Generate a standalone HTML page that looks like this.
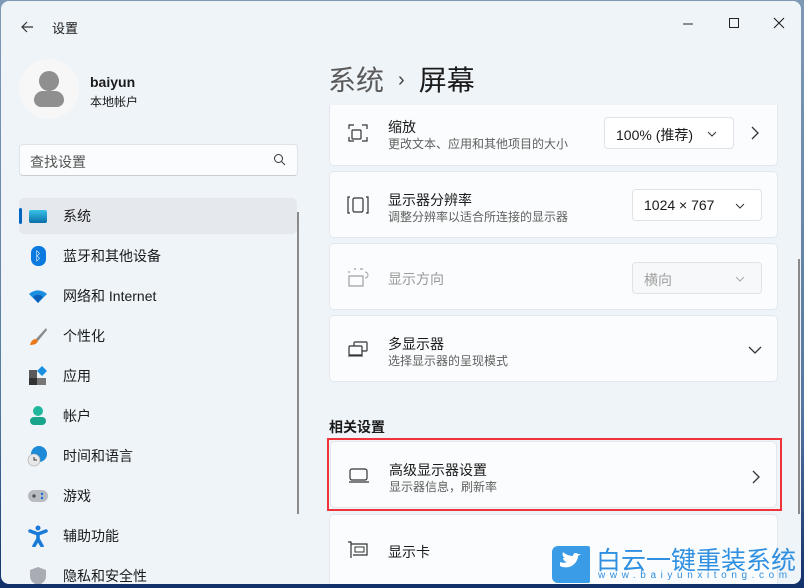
<!DOCTYPE html>
<html><head><meta charset="utf-8"><style>
*{margin:0;padding:0;box-sizing:border-box}
body{width:804px;height:588px;overflow:hidden;background:linear-gradient(#7f9ab6,#5577a0 70%,#12306a);font-family:"Liberation Sans","Noto Sans CJK SC",sans-serif;color:#1a1a1a;position:relative}
.win{position:absolute;left:1px;top:1px;width:800px;height:583px;background:#eff4f9;border-radius:8px;overflow:hidden}
.abs{position:absolute}
.nav{position:absolute;left:18px;width:278px;height:36px;font-size:14px;display:flex;align-items:center}
.nav .ic{width:22px;height:22px;margin-left:8px;margin-right:14px;display:flex;align-items:center;justify-content:center}
.card{position:absolute;left:328px;width:449px;background:#fbfcfd;border:1px solid #e3e7ec;border-radius:5px}
.t{position:absolute;left:58px;font-size:14px}
.s{position:absolute;left:58px;font-size:12px;color:#5f5f5f}
.dd{position:absolute;height:32px;border:1px solid #dfe3e8;border-radius:4px;background:#fff;font-size:14px;padding:7px 0 0 11px}
.dd svg{position:absolute;right:16px;top:13px}
</style></head><body>
<div class="win">
<svg class="abs" style="left:18px;top:18px" width="16" height="16"><path d="M14 8H3M8 3L3 8l5 5" stroke="#333" stroke-width="1.2" fill="none"/></svg>
<div class="abs" style="left:51px;top:17px;font-size:13px">设置</div>
<svg class="abs" style="left:682px;top:16px" width="110" height="14"><path d="M0 7h10" stroke="#222"/><path d="M46.5 1.5h9v9h-9z" stroke="#222" fill="none"/><path d="M91 1l10 10M101 1L91 11" stroke="#222" stroke-width="1.1"/></svg>
<div class="abs" style="left:18px;top:58px;width:60px;height:60px;border-radius:50%;background:#f7f7f7"></div>
<div class="abs" style="left:38px;top:70px;width:20px;height:20px;border-radius:50%;background:#8f8f8f"></div>
<div class="abs" style="left:33px;top:90px;width:30px;height:16px;border-radius:10px 10px 8px 8px;background:#8f8f8f"></div>
<div class="abs" style="left:89px;top:73px;font-size:14px;font-weight:bold">baiyun</div>
<div class="abs" style="left:89px;top:92px;font-size:12px">本地帐户</div>
<div class="abs" style="left:18px;top:143px;width:279px;height:32px;background:#fbfcfd;border:1px solid #dfe3e8;border-bottom-color:#c9ccd0;border-radius:4px;font-size:14px;color:#555;padding:7px 0 0 10px">查找设置</div>
<svg class="abs" style="left:272px;top:152px" width="14" height="14"><circle cx="5.5" cy="5.5" r="4" stroke="#333" fill="none"/><path d="M8.5 8.5L12 12" stroke="#333"/></svg>
<div class="abs" style="left:18px;top:197px;width:278px;height:36px;background:#e5e9ee;border-radius:5px"></div>
<div class="abs" style="left:18px;top:207px;width:3px;height:16px;background:#0067c0;border-radius:2px"></div>
<div class="abs" style="left:296px;top:211px;width:2px;height:302px;background:#8a8a8a"></div>
<div class="nav" style="top:197px"><span class="ic"><span style="width:18px;height:13px;background:linear-gradient(#39c2e8,#0a6fa8);border-radius:2px;display:block"></span></span>系统</div>
<div class="nav" style="top:237px"><span class="ic"><span style="width:15px;height:20px;background:#0a7ae0;border-radius:7px;color:#fff;font-size:12px;text-align:center;line-height:20px">ᛒ</span></span>蓝牙和其他设备</div>
<div class="nav" style="top:277px"><span class="ic"><svg width="20" height="16"><path d="M1 6a13 13 0 0 1 18 0L10 15z" fill="#1b8ee0"/><path d="M5 9a7 7 0 0 1 10 0L10 15z" fill="#0a5fb8"/></svg></span>网络和 Internet</div>
<div class="nav" style="top:317px"><span class="ic"><svg width="20" height="20"><path d="M18 2L8 13l2 2L19 4z" fill="#8a8a8a"/><path d="M8 13c-3 0-5 2-6 6 4 0 7-1 8-4z" fill="#e87a1c"/></svg></span>个性化</div>
<div class="nav" style="top:357px"><span class="ic"><svg width="20" height="20"><rect x="1" y="4" width="8" height="8" fill="#5a5a5a"/><rect x="1" y="12" width="8" height="7" fill="#333"/><rect x="9" y="12" width="9" height="7" fill="#777"/><path d="M14 0l5 5-5 5-5-5z" fill="#1a8fe0"/></svg></span>应用</div>
<div class="nav" style="top:397px"><span class="ic"><svg width="18" height="20"><circle cx="9" cy="5" r="5" fill="#1fb89c"/><rect x="1" y="11" width="16" height="8" rx="4" fill="#18a58c"/></svg></span>帐户</div>
<div class="nav" style="top:437px"><span class="ic"><svg width="22" height="22"><circle cx="12" cy="9" r="8" fill="#1d8ad8"/><circle cx="7" cy="15" r="6" fill="#e8e8e8" stroke="#aaa" stroke-width=".6"/><path d="M7 12v3h3" stroke="#333" fill="none"/></svg></span>时间和语言</div>
<div class="nav" style="top:477px"><span class="ic"><svg width="22" height="14"><rect x="1" y="1" width="20" height="12" rx="6" fill="#b8bcc2"/><path d="M5 7h4M7 5v4" stroke="#333"/><circle cx="15" cy="5" r="1.2" fill="#1a6fd0"/><circle cx="15" cy="9" r="1.2" fill="#1a6fd0"/></svg></span>游戏</div>
<div class="nav" style="top:517px"><span class="ic"><svg width="20" height="22"><circle cx="10" cy="3" r="2.5" fill="#1a7ad8"/><path d="M2 6l8 3 8-3M10 9v5l-4 7M10 14l4 7" stroke="#1a7ad8" stroke-width="3.5" fill="none" stroke-linecap="round"/></svg></span>辅助功能</div>
<div class="nav" style="top:557px"><span class="ic"><svg width="18" height="20"><path d="M9 1l8 3v6c0 5-4 8-8 9-4-1-8-4-8-9V4z" fill="#a9adb3"/></svg></span>隐私和安全性</div>

<div class="abs" style="left:327px;top:58px;font-size:28px;color:#1a1a1a"><span style="color:#5a5a5a">系统</span><span style="font-size:20px;margin:0 14px;position:relative;top:-4px;color:#444">›</span>屏幕</div>

<div class="card" style="top:104px;height:61px;border-top:none;border-radius:0 0 5px 5px">
<svg class="abs" style="left:18px;top:18px" width="20" height="20"><path d="M1 6V2h5M14 2h5v4M1 14v4h5M19 14v4h-5" stroke="#333" stroke-width="1.2" fill="none"/><rect x="4" y="7" width="9" height="9" rx="1" stroke="#333" stroke-width="1.2" fill="none"/></svg>
<div class="t" style="top:12px">缩放</div><div class="s" style="top:30px">更改文本、应用和其他项目的大小</div>
<div class="dd" style="left:274px;top:12px;width:130px">100% (推荐)<svg width="10" height="6"><path d="M1 1l4 4 4-4" stroke="#333" fill="none"/></svg></div>
<svg class="abs" style="left:420px;top:21px" width="10" height="14"><path d="M2 1l6 6-6 6" stroke="#333" stroke-width="1.3" fill="none"/></svg>
</div>
<div class="card" style="top:170px;height:67px">
<svg class="abs" style="left:17px;top:24px" width="22" height="18"><path d="M3 1H1v16h2M19 1h2v16h-2" stroke="#333" stroke-width="1.2" fill="none"/><rect x="6" y="2" width="10" height="14" rx="1.5" stroke="#333" stroke-width="1.2" fill="none"/></svg>
<div class="t" style="top:18px">显示器分辨率</div><div class="s" style="top:36px">调整分辨率以适合所连接的显示器</div>
<div class="dd" style="left:302px;top:17px;width:130px">1024 × 767<svg width="10" height="6"><path d="M1 1l4 4 4-4" stroke="#333" fill="none"/></svg></div>
</div>
<div class="card" style="top:242px;height:67px">
<svg class="abs" style="left:18px;top:24px" width="22" height="20" opacity=".45"><path d="M1 8h14v10H1z M1 3v2M6 1h2M12 1h3" stroke="#333" stroke-width="1.2" fill="none"/><path d="M17 4a3 3 0 0 1 0 6" stroke="#333" fill="none"/></svg>
<div class="t" style="top:25px;color:#9a9a9a">显示方向</div>
<div class="dd" style="left:302px;top:18px;width:130px;color:#a0a0a0;background:#f7f8f9">横向<svg width="10" height="6"><path d="M1 1l4 4 4-4" stroke="#aaa" fill="none"/></svg></div>
</div>
<div class="card" style="top:314px;height:67px">
<svg class="abs" style="left:18px;top:25px" width="22" height="16"><rect x="6" y="1" width="13" height="9" rx="1" stroke="#333" stroke-width="1.2" fill="none"/><rect x="1" y="5" width="13" height="9" rx="1" stroke="#333" stroke-width="1.2" fill="#fbfcfd"/><path d="M0 15h15" stroke="#333"/></svg>
<div class="t" style="top:18px">多显示器</div><div class="s" style="top:36px">选择显示器的呈现模式</div>
<svg class="abs" style="left:418px;top:29px" width="14" height="10"><path d="M1 2l6 6 6-6" stroke="#333" stroke-width="1.3" fill="none"/></svg>
</div>
<div class="abs" style="left:328px;top:416px;font-size:14px;font-weight:bold">相关设置</div>
<div class="abs" style="left:326px;top:437px;width:455px;height:73px;border:2px solid #f0323a"></div>
<div class="card" style="top:440px;height:67px;left:329px;width:447px">
<svg class="abs" style="left:17px;top:26px" width="22" height="16"><rect x="2" y="1" width="17" height="11" rx="2" stroke="#333" stroke-width="1.2" fill="none"/><path d="M1 14h20" stroke="#333" stroke-width="1.2"/></svg>
<div class="t" style="top:18px">高级显示器设置</div><div class="s" style="top:36px">显示器信息，刷新率</div>
<svg class="abs" style="left:420px;top:28px" width="10" height="14"><path d="M2 1l6 6-6 6" stroke="#333" stroke-width="1.3" fill="none"/></svg>
</div>
<div class="card" style="top:513px;height:80px">
<svg class="abs" style="left:17px;top:26px" width="22" height="18"><path d="M1 1h3v16M4 3h16v11H6" stroke="#333" stroke-width="1.2" fill="none"/><rect x="8" y="6" width="9" height="5" stroke="#333" fill="none"/></svg>
<div class="t" style="top:27px">显示卡</div>
</div>
<div class="abs" style="left:797px;top:258px;width:2px;height:255px;background:#8a8a8a"></div>
<div class="abs" style="left:551px;top:545px;width:38px;height:37px;background:#3a9be6;border-radius:6px 2px 2px 6px"></div>
<svg class="abs" style="left:556px;top:551px" width="28" height="24"><path d="M3 14c4 2 9 2 13-1 4-3 5-7 5-9l3-2-3 0c-2-2-5-1-5 2-4 0-8-2-10-4-1 3 0 5 2 6l-2 0c0 2 2 4 4 4-2 1-4 1-7 0z" fill="#fff"/></svg>
<div class="abs" style="left:595px;top:540px;font-size:25px;color:#2f8fe0;white-space:nowrap">白云一键重装系统</div>
<div class="abs" style="left:597px;top:569px;font-size:10px;color:#2f8fe0;letter-spacing:4.6px;white-space:nowrap">www.baiyunxitong.com</div>
</div>
</body></html>
